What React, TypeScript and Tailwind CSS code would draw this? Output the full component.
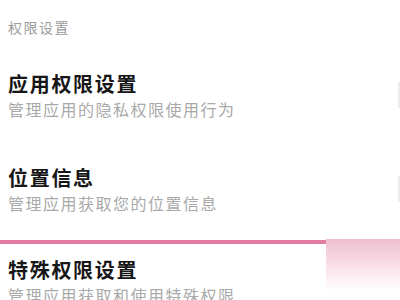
import React from 'react';

const items = [
  { title: '应用权限设置', desc: '管理应用的隐私权限使用行为' },
  { title: '位置信息', desc: '管理应用获取您的位置信息' },
];

const App: React.FC = () => {
  return (
    <div
      className="w-[400px] h-[300px] overflow-hidden bg-white"
      style={{ fontFamily: '"Noto Sans CJK SC", "Noto Sans", sans-serif' }}
    >
      {/* Section header */}
      <p className="pt-[17px] pl-[8px] text-[14px] leading-[20px] tracking-[1.5px] text-[#9b9b9b]">
        权限设置
      </p>

      <div className="pt-[33px] flex flex-col gap-[44px]">
        {items.map((item) => (
          <div key={item.title} className="flex items-center justify-between">
            <div className="pl-[8px]">
              <h2 className="text-[20px] leading-[28px] font-bold tracking-[1.7px] text-[#161616]">
                {item.title}
              </h2>
              <p className="text-[16px] leading-[22px] tracking-[1.5px] text-[#a9a9a9]">
                {item.desc}
              </p>
            </div>
            <div className="w-[2px] h-[26px] bg-[#ececec] mr-0" />
          </div>
        ))}
      </div>

      {/* Highlighted row */}
      <div className="mt-[26px] flex">
        <div className="flex-1">
          <div className="h-[4px] bg-[#e07ba1]" />
          <div className="pt-[12px] pl-[8px]">
            <h2 className="text-[20px] leading-[28px] font-bold tracking-[1.7px] text-[#161616]">
              特殊权限设置
            </h2>
            <p className="text-[16px] leading-[22px] tracking-[1.5px] text-[#a9a9a9]">
              管理应用获取和使用特殊权限
            </p>
          </div>
        </div>
        <div className="w-[74px] h-[52px] -mt-[1px] bg-gradient-to-b from-[#efbed0] to-white" />
      </div>
    </div>
  );
};

export default App;
